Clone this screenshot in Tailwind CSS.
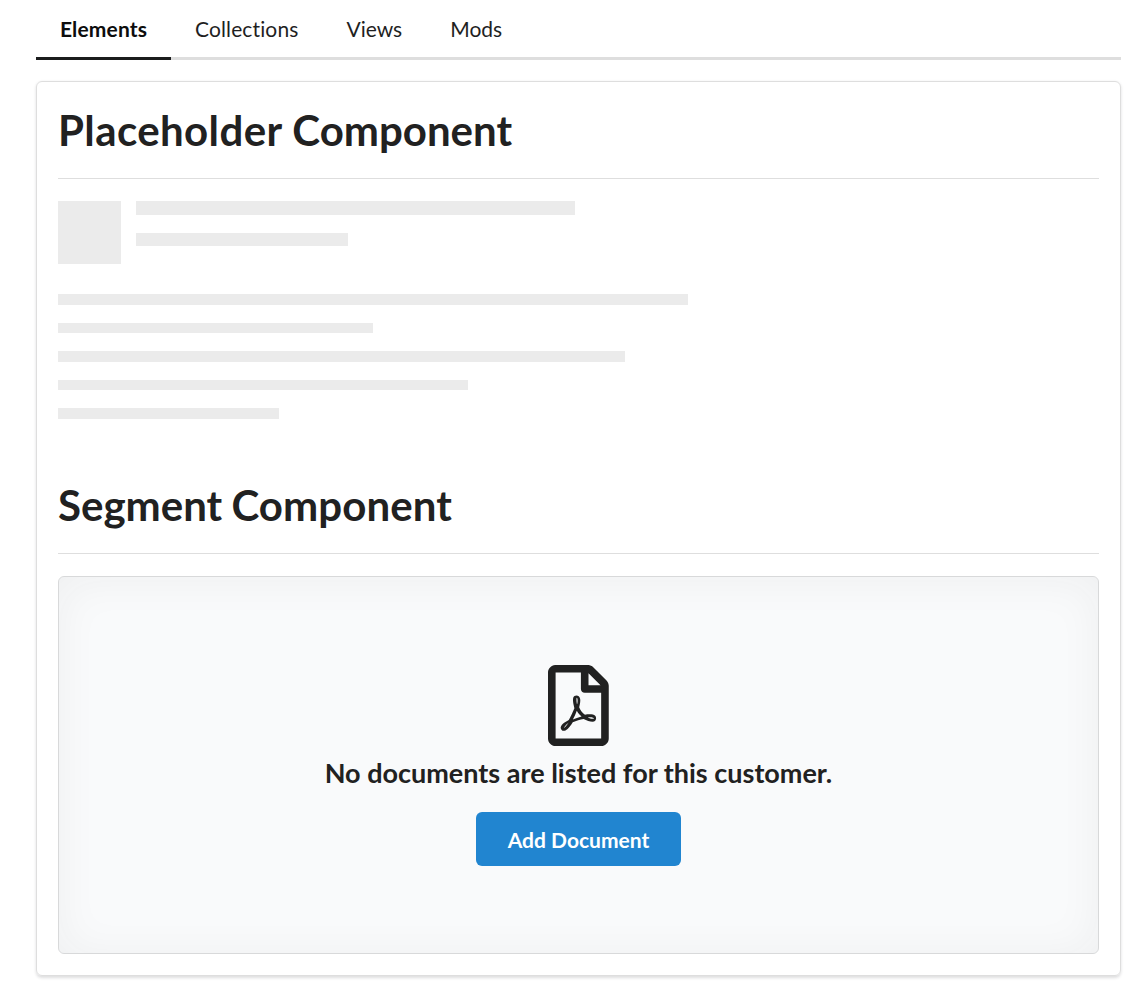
<!DOCTYPE html>
<html lang="en">
<head>
<meta charset="utf-8">
<title>Elements</title>
<script src="https://cdn.jsdelivr.net/npm/@tailwindcss/browser@4"></script>
</head>
<body class="min-h-screen bg-white font-['Lato',sans-serif] text-[21px] leading-[30px] text-[#212121] [font-variant-ligatures:none]">
<main class="ml-9 w-[1085px] pb-6">
  <nav class="flex h-[60px] border-b-3 border-[#dedede] text-[#1f1f1f]">
    <a class="-mb-[3px] flex h-[60px] w-[135px] justify-center border-b-3 border-[#1b1c1d] pt-[14px] font-bold tracking-[0.15px] text-[#0d0d0d]">Elements</a>
    <a class="px-6 pt-[14px] tracking-[0.13px]">Collections</a>
    <a class="px-6 pt-[14px]">Views</a>
    <a class="px-6 pt-[14px]">Mods</a>
  </nav>
  <section class="mt-[21px] h-[895px] rounded-md border border-[#dedede] px-[21px] shadow-[0_1.5px_3px_0_rgba(34,36,38,0.15)]">
    <h1 class="h-[97px] border-b border-[#dedede] pt-[21px] text-[42px] font-bold leading-[54px] [word-spacing:-0.5px]"><span class="tracking-[0.4px]">Placeholder</span> Component</h1>
    <div class="mt-[22px] flex h-[63px] gap-[15px]">
      <div class="size-[63px] bg-[#ebebeb]"></div>
      <div>
        <div class="h-[14px] w-[439px] bg-[#ebebeb]"></div>
        <div class="mt-[18px] h-[13px] w-[212px] bg-[#ebebeb]"></div>
      </div>
    </div>
    <div class="mt-[30px] h-[163px]">
      <div class="h-[11px] w-[630px] bg-[#ebebeb]"></div>
      <div class="mt-[18px] h-[10px] w-[315px] bg-[#ebebeb]"></div>
      <div class="mt-[18px] h-[11px] w-[567px] bg-[#ebebeb]"></div>
      <div class="mt-[18px] h-[10px] w-[410px] bg-[#ebebeb]"></div>
      <div class="mt-[18px] h-[11px] w-[221px] bg-[#ebebeb]"></div>
    </div>
    <h1 class="h-[97px] border-b border-[#dedede] pt-[21px] text-[42px] font-bold leading-[54px] [word-spacing:-1px]">Segment <span class="tracking-[0.1px]">Component</span></h1>
    <div class="mt-[22px] flex h-[378px] flex-col items-center rounded-md border border-[#d8d9da] bg-[#f9fafb] pt-[88px] shadow-[inset_0_3px_44px_rgba(34,36,38,0.05)]">
      <svg class="h-[81px] w-[60.75px]" viewBox="0 0 384 512" fill="#212121"><path d="M369.9 97.9L286 14C277 5 264.8-.1 252.1-.1H48C21.500 0 0 21.500 0 48v416c0 26.500 21.500 48 48 48h288c26.500 0 48-21.500 48-48V131.900c0-12.700-5.100-25-14.100-34zM332.100 128H256V51.900l76.100 76.100zM48 464V48h160v104c0 13.300 10.700 24 24 24h104v288H48zm250.200-143.700c-12.200-12-47-8.700-64.400-6.500-17.200-10.500-28.700-25-36.800-46.300 3.900-16.100 10.100-40.600 5.400-56-4.200-26.200-37.800-23.600-42.600-5.900-4.400 16.100-.4 38.500 7 67.100-10 23.900-24.900 56-35.400 74.400-20 10.300-47 26.200-51 46.200-3.300 15.800 26 55.200 76.100-31.200 22.400-7.400 46.800-16.500 68.400-20.100 18.900 10.200 41 17 55.800 17 25.500 0 28-28.200 17.500-38.700zm-198.100 77.800c5.100-13.700 24.500-29.500 30.400-35-19 30.300-30.400 35.700-30.400 35zm81.600-190.600c7.400 0 6.700 32.100 1.800 40.800-4.400-13.900-4.300-40.800-1.800-40.800zm-24.400 136.600c9.700-16.900 18-37 24.700-54.700 8.300 15.100 18.900 27.200 30.100 35.500-20.800 4.300-38.900 13.100-54.800 19.200zm131.600-5s-5 6-37.300-7.800c35.100-2.600 40.900 5.400 37.300 7.800z"/></svg>
      <h2 class="mt-[9px] mb-px text-[27px] font-bold leading-[36px]">No documents are listed for this customer.</h2>
      <button class="mt-5 h-[54px] w-[205px] rounded-md bg-[#2185d0] pt-[2px] font-bold text-white">Add Document</button>
    </div>
  </section>
</main>
</body>
</html>
